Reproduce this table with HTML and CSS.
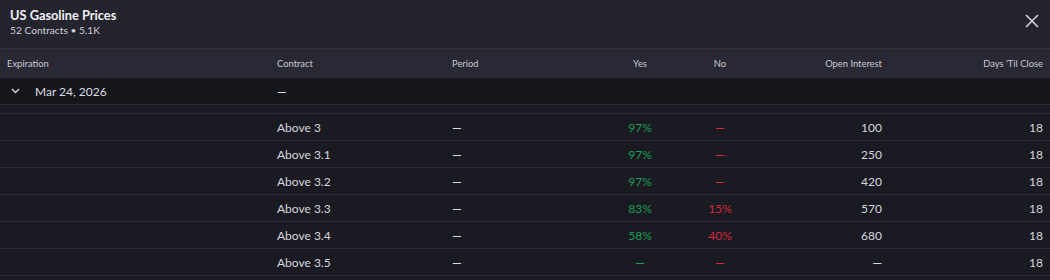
FILE: index.html
```html
<!DOCTYPE html>
<html>
<head>
<meta charset="utf-8">
<link rel="stylesheet" href="styles.css">
</head>
<body>
<div class="panel">
  <div class="top">
    <div class="titles">
      <div class="title">US Gasoline Prices</div>
      <div class="sub">52 Contracts • 5.1K</div>
    </div>
    <svg class="close" width="14" height="14" viewBox="0 0 14 14"><path d="M1 1L13 13M13 1L1 13" stroke="#d8d8de" stroke-width="1.5" fill="none"/></svg>
  </div>
  <div class="grid head">
    <div class="c">Expiration</div>
    <div class="c">Contract</div>
    <div class="c">Period</div>
    <div class="c ctr">Yes</div>
    <div class="c ctr">No</div>
    <div class="c rt">Open Interest</div>
    <div class="c rt">Days 'Til Close</div>
  </div>
  <div class="grid group">
    <div class="c exp"><svg class="chev" width="9" height="6" viewBox="0 0 9 6"><path d="M1 1L4.5 4.5L8 1" stroke="#d8d8de" stroke-width="1.4" fill="none"/></svg><span>Mar 24, 2026</span></div>
    <div class="c dash">—</div>
    <div class="c"></div><div class="c"></div><div class="c"></div><div class="c"></div><div class="c"></div>
  </div>
  <div class="spacer"></div>
  <div class="grid row"><div class="c"></div><div class="c">Above 3</div><div class="c dash">—</div><div class="c ctr g">97%</div><div class="c ctr r dash">—</div><div class="c rt">100</div><div class="c rt">18</div></div>
  <div class="grid row"><div class="c"></div><div class="c">Above 3.1</div><div class="c dash">—</div><div class="c ctr g">97%</div><div class="c ctr r dash">—</div><div class="c rt">250</div><div class="c rt">18</div></div>
  <div class="grid row"><div class="c"></div><div class="c">Above 3.2</div><div class="c dash">—</div><div class="c ctr g">97%</div><div class="c ctr r dash">—</div><div class="c rt">420</div><div class="c rt">18</div></div>
  <div class="grid row"><div class="c"></div><div class="c">Above 3.3</div><div class="c dash">—</div><div class="c ctr g">83%</div><div class="c ctr r">15%</div><div class="c rt">570</div><div class="c rt">18</div></div>
  <div class="grid row"><div class="c"></div><div class="c">Above 3.4</div><div class="c dash">—</div><div class="c ctr g">58%</div><div class="c ctr r">40%</div><div class="c rt">680</div><div class="c rt">18</div></div>
  <div class="grid row"><div class="c"></div><div class="c">Above 3.5</div><div class="c dash">—</div><div class="c ctr g dash">—</div><div class="c ctr r dash">—</div><div class="c rt dash">—</div><div class="c rt">18</div></div>
</div>
</body>
</html>
```
FILE: styles.css
```css
* { box-sizing: border-box; }
html, body { margin: 0; padding: 0; background: #1a1a22; }
body { font-family: Lato, "Noto Sans", sans-serif; color: #d6d6dc; width: 1050px; height: 280px; overflow: hidden; }
.panel { width: 1050px; }
.top { height: 49px; background: #24242e; border-bottom: 1px solid #30303b; display: flex; justify-content: space-between; align-items: flex-start; padding: 7px 10px 0 10px; }
.title { font-size: 12.8px; font-weight: 700; color: #f0f0f4; line-height: 16px; }
.sub { font-size: 10.2px; color: #d0d0d8; line-height: 14px; }
.close { margin-top: 7px; margin-right: 1px; }
.grid { display: grid; grid-template-columns: 270px 175px 155px 80px 80px 129px 161px; align-items: center; }
.c { padding: 0 7px; white-space: nowrap; }
.ctr { text-align: center; }
.rt { text-align: right; }
.dash { font-weight: 700; }
.head { height: 29px; background: #292935; font-size: 9.4px; color: #c8c8d0; }
.group { height: 27px; background: #16161d; border-bottom: 1px solid #2c2c36; font-size: 12px; color: #dcdce2; }
.exp { display: flex; align-items: center; padding-left: 11px; }
.chev { margin-right: 15px; }
.spacer { height: 9px; background: #1a1a22; border-bottom: 1px solid #2c2c36; }
.row { height: 27px; padding-top: 1px; background: #1a1a22; border-bottom: 1px solid #2c2c36; font-size: 12px; color: #d6d6dc; }
.g { color: #1c9e52; }
.r { color: #d42a3c; }
```
